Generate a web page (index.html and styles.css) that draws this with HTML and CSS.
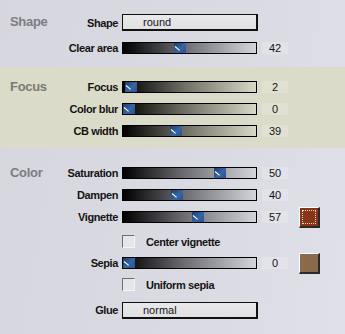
FILE: index.html
```html
<!DOCTYPE html>
<html>
<head>
    <meta charset="UTF-8">
    <title>Effect settings</title>
    <link rel="stylesheet" href="styles.css">
</head>
<body>
    <div class="panel">
        <section class="group group-shape">
            <div class="heading">Shape</div>
            <div class="rows">
                <div class="row row-select">
                    <span class="label">Shape</span>
                    <div class="select">round</div>
                </div>
                <div class="row row-after-select">
                    <span class="label">Clear area</span>
                    <div class="slider"><span class="thumb" style="margin-left: 51px"></span></div>
                    <span class="value">42</span>
                </div>
            </div>
        </section>

        <section class="group group-focus">
            <div class="heading">Focus</div>
            <div class="rows">
                <div class="row">
                    <span class="label">Focus</span>
                    <div class="slider"><span class="thumb" style="margin-left: 2px"></span></div>
                    <span class="value">2</span>
                </div>
                <div class="row">
                    <span class="label">Color blur</span>
                    <div class="slider"><span class="thumb" style="margin-left: 0px"></span></div>
                    <span class="value">0</span>
                </div>
                <div class="row">
                    <span class="label">CB width</span>
                    <div class="slider"><span class="thumb" style="margin-left: 47px"></span></div>
                    <span class="value">39</span>
                </div>
            </div>
        </section>

        <section class="group group-color">
            <div class="heading">Color</div>
            <div class="rows">
                <div class="row">
                    <span class="label">Saturation</span>
                    <div class="slider"><span class="thumb" style="margin-left: 91px"></span></div>
                    <span class="value">50</span>
                </div>
                <div class="row">
                    <span class="label">Dampen</span>
                    <div class="slider"><span class="thumb" style="margin-left: 48px"></span></div>
                    <span class="value">40</span>
                </div>
                <div class="row">
                    <span class="label">Vignette</span>
                    <div class="slider"><span class="thumb" style="margin-left: 69px"></span></div>
                    <span class="value">57</span>
                    <span class="swatch swatch-vignette"></span>
                </div>
                <div class="row row-check">
                    <span class="label"></span>
                    <span class="checkbox"></span>
                    <span class="check-text">Center vignette</span>
                </div>
                <div class="row">
                    <span class="label">Sepia</span>
                    <div class="slider"><span class="thumb" style="margin-left: 0px"></span></div>
                    <span class="value">0</span>
                    <span class="swatch swatch-sepia"></span>
                </div>
                <div class="row row-check row-check-last">
                    <span class="label"></span>
                    <span class="checkbox"></span>
                    <span class="check-text">Uniform sepia</span>
                </div>
                <div class="row row-select row-glue">
                    <span class="label">Glue</span>
                    <div class="select">normal</div>
                </div>
            </div>
        </section>
    </div>
</body>
</html>
```

FILE: styles.css
```css
body {
    margin: 0;
    font-family: "Liberation Sans", Arial, sans-serif;
    background: #d9d9e1;
    color: #141414;
}
.panel {
    width: 345px;
    height: 334px;
    overflow: hidden;
    background: linear-gradient(100deg, #d6d6de 0%, #dadae2 60%, #e0e0e8 100%);
}
.group {
    display: flex;
    align-items: flex-start;
    padding-left: 10px;
}
.group-shape {
    padding-top: 11px;
    padding-bottom: 8px;
}
.group-focus {
    padding-top: 9px;
    padding-bottom: 6px;
    background: #dbdbca;
}
.group-color {
    padding-top: 14px;
}
.heading {
    width: 50px;
    height: 22px;
    line-height: 22px;
    font-size: 13px;
    font-weight: bold;
    letter-spacing: -0.3px;
    color: #7c7c84;
}
.group-focus .heading {
    color: #7a7a72;
}
.row {
    display: flex;
    align-items: center;
    height: 22px;
}
.row-select {
    height: 23px;
}
.row-after-select {
    margin-top: 3px;
}
.row-check {
    height: 21px;
    margin-top: 3px;
}
.row-check-last {
    margin-top: 0;
}
.row-glue {
    height: 24px;
    margin-top: 3px;
}
.label {
    width: 58px;
    margin-right: 4px;
    display: flex;
    justify-content: flex-end;
    white-space: nowrap;
    font-size: 11px;
    font-weight: bold;
    letter-spacing: -0.4px;
}
.select {
    box-sizing: border-box;
    width: 136px;
    height: 17px;
    padding-left: 20px;
    line-height: 14px;
    font-size: 11px;
    background: linear-gradient(#e9e9ea, #e1e1e3);
    border: 1px solid #111;
    border-right-width: 2px;
    border-bottom-width: 2px;
}
.slider {
    box-sizing: border-box;
    display: flex;
    width: 135px;
    height: 12px;
    border: 1px solid #000;
    background: linear-gradient(to right, #000 0%, #6a6a70 45%, #d4d4dc 100%);
}
.group-focus .slider {
    background: linear-gradient(to right, #000 0%, #6c6c62 45%, #d8d8c6 100%);
}
.thumb {
    position: relative;
    width: 12px;
    height: 10px;
    background: linear-gradient(135deg, #1d3c6a 0%, #3566a6 55%, #2a528c 100%);
}
.thumb::before {
    content: "";
    position: absolute;
    left: 1px;
    top: 3px;
    width: 6px;
    height: 1px;
    background: #fff;
    transform: rotate(40deg);
    transform-origin: left center;
}
.value {
    width: 26px;
    height: 12px;
    margin-left: 5px;
    line-height: 12px;
    text-align: center;
    font-size: 11px;
    background: rgba(255, 255, 255, 0.18);
}
.swatch {
    box-sizing: border-box;
    width: 21px;
    height: 21px;
    margin-left: 11px;
    border-top: 1px solid #fff;
    border-left: 1px solid #fff;
    border-right: 2px solid #2a2a2a;
    border-bottom: 2px solid #2a2a2a;
    position: relative;
}
.swatch-vignette {
    background: #873516;
}
.swatch-vignette::after {
    content: "";
    position: absolute;
    left: 2px;
    top: 2px;
    right: 2px;
    bottom: 2px;
    border: 1px dotted #e8d8d0;
}
.swatch-sepia {
    background: #8a6b49;
}
.checkbox {
    box-sizing: border-box;
    width: 13px;
    height: 13px;
    background: #e6e6e8;
    border-top: 1px solid #6e6e72;
    border-left: 1px solid #6e6e72;
    border-right: 1px solid #f4f4f6;
    border-bottom: 1px solid #f4f4f6;
}
.check-text {
    margin-left: 11px;
    font-size: 11px;
    font-weight: bold;
    letter-spacing: -0.4px;
}
```
